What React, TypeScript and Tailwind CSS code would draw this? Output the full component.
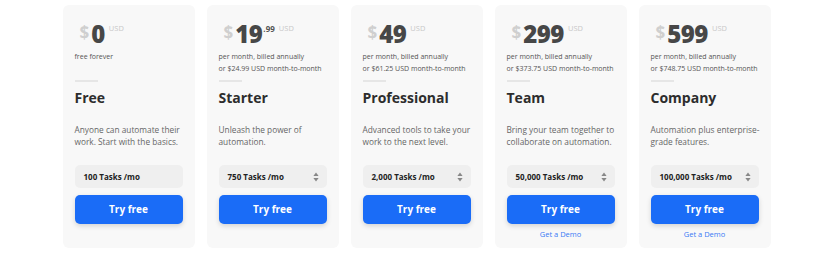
import React from 'react';

type Plan = {
  name: string;
  price: string;
  cents?: string;
  note: string[];
  desc: string[];
  tasks: string;
  spinner: boolean;
  demo: boolean;
};

const plans: Plan[] = [
  { name: 'Free', price: '0', note: ['free forever'], desc: ['Anyone can automate their', 'work. Start with the basics.'], tasks: '100 Tasks /mo', spinner: false, demo: false },
  { name: 'Starter', price: '19', cents: '.99', note: ['per month, billed annually', 'or $24.99 USD month-to-month'], desc: ['Unleash the power of', 'automation.'], tasks: '750 Tasks /mo', spinner: true, demo: false },
  { name: 'Professional', price: '49', note: ['per month, billed annually', 'or $61.25 USD month-to-month'], desc: ['Advanced tools to take your', 'work to the next level.'], tasks: '2,000 Tasks /mo', spinner: true, demo: false },
  { name: 'Team', price: '299', note: ['per month, billed annually', 'or $373.75 USD month-to-month'], desc: ['Bring your team together to', 'collaborate on automation.'], tasks: '50,000 Tasks /mo', spinner: true, demo: true },
  { name: 'Company', price: '599', note: ['per month, billed annually', 'or $748.75 USD month-to-month'], desc: ['Automation plus enterprise-', 'grade features.'], tasks: '100,000 Tasks /mo', spinner: true, demo: true },
];

const Spinner = () => (
  <svg width="6" height="10" viewBox="0 0 6 10" className="text-[#888]">
    <path d="M3 0.5 L5.6 4 H0.4 Z" fill="currentColor" />
    <path d="M3 9.5 L5.6 6 H0.4 Z" fill="currentColor" />
  </svg>
);

const Card = ({ plan }: { plan: Plan }) => (
  <div className="w-[132px] h-[243px] bg-[#f8f8f8] rounded-[6px] px-3 pt-[15px] flex flex-col">
    {/* Price */}
    <div className="flex items-start h-[28px] pl-[5px]">
      <span className="text-[17px] font-bold text-[#cfcfcf] leading-[28px] mt-[-1px] mr-[2px]">$</span>
      <span className="text-[24px] font-extrabold text-[#474747] leading-[28px] tracking-[-0.5px]">{plan.price}</span>
      {plan.cents && <span className="text-[8px] font-bold text-[#555] leading-none mt-[5px] ml-[1px]">{plan.cents}</span>}
      <span className="text-[7.5px] text-[#c8c8c8] leading-none mt-[5px] ml-[4px]">USD</span>
    </div>

    {/* Billing note */}
    <div className="mt-[3px] h-[24px] text-[7px] leading-[12px] text-[#555] whitespace-nowrap">
      {plan.note.map((l) => (
        <div key={l}>{l}</div>
      ))}
    </div>

    <div className="mt-[5px] w-[23px] h-[2px] bg-[#e6e6e6]" />

    <div className="mt-[6px] text-[14px] font-bold leading-[20px] text-[#2d2d2d]">{plan.name}</div>

    <div className="mt-[16px] text-[8.3px] leading-[12px] text-[#666] whitespace-nowrap">
      {plan.desc.map((l) => (
        <div key={l}>{l}</div>
      ))}
    </div>

    {/* Task selector */}
    <div className="mt-[17px] h-[23px] rounded-[5px] bg-[#efefef] flex items-center justify-between pl-[9px] pr-[8px]">
      <span className="text-[8px] font-bold text-[#222]">{plan.tasks}</span>
      {plan.spinner && <Spinner />}
    </div>

    <button className="mt-[7px] h-[29px] w-full rounded-[5px] bg-[#1a6cf7] text-white text-[10px] font-bold shadow-[0_2px_5px_rgba(0,0,0,0.15)]">
      Try free
    </button>

    {plan.demo && (
      <div className="mt-[5px] text-center text-[7.5px] leading-[10px] text-[#3b7bf5]">Get a Demo</div>
    )}
  </div>
);

export default function App() {
  return (
    <div className="w-[831px] h-[262px] bg-white flex justify-center gap-3 pt-[5px] pl-[2px]" style={{ fontFamily: '"Open Sans", sans-serif' }}>
      {plans.map((p) => (
        <Card key={p.name} plan={p} />
      ))}
    </div>
  );
}
